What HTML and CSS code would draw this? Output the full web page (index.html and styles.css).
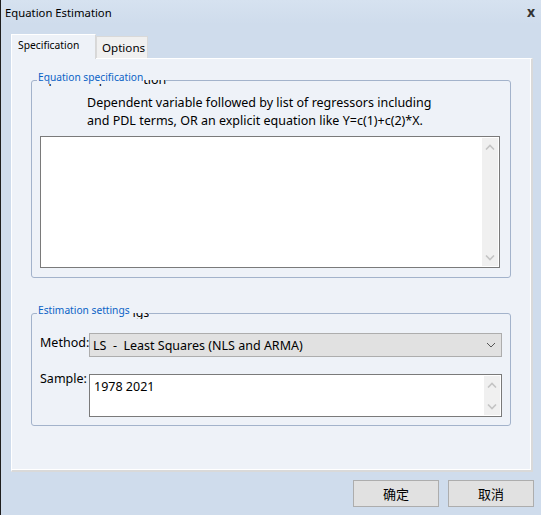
FILE: index.html
```html
<!DOCTYPE html>
<html>
<head>
<meta charset="utf-8">
<link rel="stylesheet" href="styles.css">
</head>
<body>
<div class="window">
  <div class="titlebar">
    <span class="title">Equation Estimation</span>
    <span class="close">x</span>
  </div>
  <div class="tabs">
    <div class="tab active">Specification</div>
    <div class="tab">Options</div>
  </div>
  <div class="panel">
    <div class="group g1">
      <div class="ghost"><span>Equation specification</span></div>
      <div class="legend">Equation specification</div>
      <p class="desc">Dependent variable followed by list of regressors including<br>and PDL terms, OR an explicit equation like Y=c(1)+c(2)*X.</p>
      <div class="textbox big">
        <div class="content"></div>
        <div class="vscroll">
          <svg width="10" height="6" viewBox="0 0 10 6"><path d="M1 5.5 L5 1.5 L9 5.5" fill="none" stroke="#c4c4c4" stroke-width="1.6"/></svg>
          <svg width="10" height="6" viewBox="0 0 10 6"><path d="M1 0.5 L5 4.5 L9 0.5" fill="none" stroke="#c4c4c4" stroke-width="1.6"/></svg>
        </div>
      </div>
    </div>
    <div class="group g2">
      <div class="ghost"><span>Estimation settings</span></div>
      <div class="legend">Estimation settings</div>
      <div class="form">
        <span class="label method">Method:</span>
        <div class="select">
          <span>LS&nbsp; -&nbsp; Least Squares (NLS and ARMA)</span>
          <svg width="10" height="6" viewBox="0 0 10 6"><path d="M1 1 L5 5 L9 1" fill="none" stroke="#555" stroke-width="1"/></svg>
        </div>
        <span class="label sample">Sample:</span>
        <div class="textbox small">
          <div class="content">1978 2021</div>
          <div class="vscroll">
            <svg width="10" height="6" viewBox="0 0 10 6"><path d="M1 5.5 L5 1.5 L9 5.5" fill="none" stroke="#c4c4c4" stroke-width="1.6"/></svg>
            <svg width="10" height="6" viewBox="0 0 10 6"><path d="M1 0.5 L5 4.5 L9 0.5" fill="none" stroke="#c4c4c4" stroke-width="1.6"/></svg>
          </div>
        </div>
      </div>
    </div>
  </div>
  <div class="buttons">
    <button class="btn">确定</button>
    <button class="btn">取消</button>
  </div>
</div>
</body>
</html>
```

FILE: styles.css
```css
* { box-sizing: border-box; }
html, body { margin: 0; padding: 0; }
body {
  width: 541px;
  height: 515px;
  overflow: hidden;
  background: #cfdcec;
  font-family: "Noto Sans", "Noto Sans CJK SC", sans-serif;
  color: #000;
}
.window {
  width: 541px;
  height: 515px;
  border-left: 1px solid #1e1e1e;
  background: #cfdcec;
  display: flex;
  flex-direction: column;
}
.titlebar {
  height: 24px;
  display: flex;
  align-items: center;
  justify-content: space-between;
  padding: 0 6px 0 4px;
  background: linear-gradient(#d6e2f0, #cfdcec);
}
.title { font-size: 11.3px; }
.close { font-size: 14px; font-weight: bold; color: #333; line-height: 1; }
.tabs {
  margin-top: 10px;
  padding-left: 10px;
  display: flex;
  align-items: flex-end;
  height: 24px;
  position: relative;
  z-index: 1;
}
.tab {
  width: 52px;
  height: 22px;
  padding: 0 0 0 5px;
  font-size: 11.6px;
  line-height: 21px;
  white-space: nowrap;
  background: #f0f0f0;
  border: 1px solid #d9d9d9;
  border-bottom: none;
}
.tab.active {
  width: 85px;
  height: 25px;
  margin-bottom: -1px;
  font-size: 10.3px;
  line-height: 20px;
  padding-left: 6px;
  background: #eef2f8;
  border: 1px solid #fff;
  border-right: 1px solid #d7d7d7;
  border-bottom: none;
}
.panel {
  margin-left: 10px;
  width: 522px;
  height: 414px;
  background: #eef2f8;
  border-top: 1px solid #fff;
  border-left: 1px solid #fff;
  border-right: 2px solid #d9d9d9;
  border-bottom: 2px solid #d9d9d9;
  box-shadow: inset -1px -1px 0 #fff;
  padding-left: 19px;
  padding-top: 21px;
}
.group {
  position: relative;
  width: 480px;
  border: 1px solid #a3b3cb;
  border-radius: 3px;
}
.g1 { height: 198px; padding: 13px 0 0 8px; }
.g2 { height: 113px; margin-top: 35px; padding: 19px 0 0 8px; }
.legend {
  position: absolute;
  top: -10px;
  left: 5px;
  height: 13px;
  padding: 0 1px;
  line-height: 13px;
  font-size: 10.2px;
  color: #0a62c6;
  background: #eef2f8;
  white-space: nowrap;
}
.ghost {
  position: absolute;
  top: -1px;
  left: 5px;
  height: 6px;
  overflow: hidden;
  background: #eef2f8;
  white-space: nowrap;
}
.ghost span {
  display: block;
  margin-top: -7px;
  font-size: 12.5px;
  line-height: 13px;
}
.desc {
  margin: 0 0 6px 47px;
  font-size: 12.5px;
  line-height: 18px;
}
.textbox {
  display: flex;
  background: #fff;
  border: 1px solid #7a7a7a;
  padding: 1px;
}
.textbox .content { flex: 1; font-size: 12.5px; padding: 2px 3px; }
.textbox.big { width: 460px; height: 132px; }
.textbox.small { width: 413px; height: 43px; }
.vscroll {
  width: 16px;
  background: #f0f0f0;
  display: flex;
  flex-direction: column;
  align-items: center;
  justify-content: space-between;
  padding: 6px 0 5px;
}
.form {
  display: grid;
  grid-template-columns: 49px 413px;
  row-gap: 17px;
}
.label {
  font-size: 12.5px;
  white-space: nowrap;
  overflow: visible;
}
.label.method { line-height: 20px; }
.label.sample { line-height: 12px; margin-top: -1px; }
.select {
  position: relative;
  height: 24px;
  background: #e1e1e1;
  border: 1px solid #adadad;
  display: flex;
  align-items: center;
  justify-content: space-between;
  padding: 0 5px 0 3px;
  font-size: 12.5px;
}
.buttons {
  display: flex;
  justify-content: flex-end;
  gap: 9px;
  padding-right: 7px;
  margin-top: 8px;
}
.btn {
  width: 86px;
  height: 27px;
  background: #e1e1e1;
  border: 1px solid #adadad;
  font-family: "Noto Sans CJK SC", sans-serif;
  font-size: 13px;
  color: #000;
  padding: 0;
}
```
